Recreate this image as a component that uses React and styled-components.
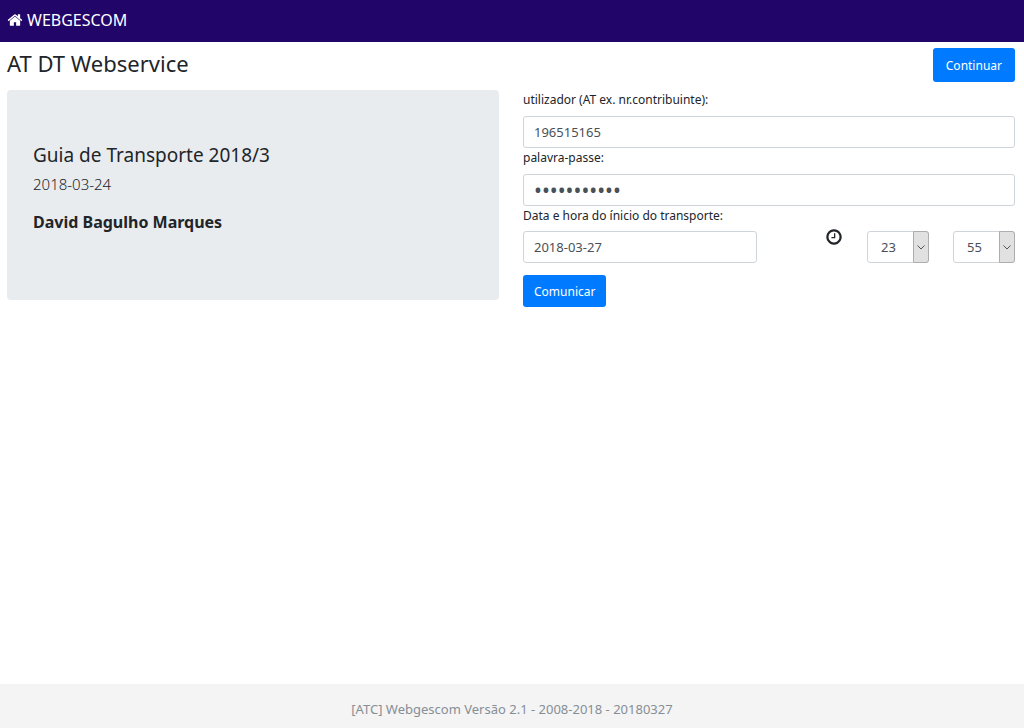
import React from "react";
import styled, { createGlobalStyle } from "styled-components";

const GlobalStyle = createGlobalStyle`
  *, *::before, *::after { box-sizing: border-box; }
  body {
    margin: 0;
    background: #fff;
    color: #212529;
    font-family: "Noto Sans", "Open Sans", sans-serif;
    font-size: 12px;
    line-height: 20px;
  }
  input, select, button { font-family: inherit; }
`;

const Page = styled.div`
  display: flex;
  flex-direction: column;
  min-height: 100vh;
`;

const Navbar = styled.nav`
  display: flex;
  align-items: center;
  height: 42px;
  padding: 0 7px 3px;
  background: #220569;
`;

const Brand = styled.a`
  display: flex;
  align-items: center;
  gap: 4px;
  color: #fff;
  font-size: 16px;
  text-decoration: none;
`;

const Icon = styled.svg`
  display: block;
  width: ${(p) => p.$size}px;
  height: ${(p) => p.$size}px;
  fill: currentColor;
`;

const Main = styled.main`
  flex: 1;
  padding: 6px 9px 24px 7px;
`;

const TitleRow = styled.div`
  display: flex;
  justify-content: space-between;
  align-items: flex-start;
  margin-bottom: 8px;
`;

const Title = styled.h1`
  margin: 0;
  font-size: 22px;
  font-weight: 400;
  line-height: 30px;
`;

const Button = styled.button`
  height: ${(p) => (p.$large ? 34 : 32)}px;
  padding: 1px ${(p) => (p.$large ? 13 : 11)}px 0;
  border: 0;
  border-radius: 3px;
  background: #007bff;
  color: #fff;
  font-size: 12px;
  line-height: 20px;
  cursor: pointer;
`;

const Columns = styled.div`
  display: grid;
  grid-template-columns: minmax(0, 1fr) minmax(0, 1fr);
  align-items: start;
  gap: 24px;
`;

const Summary = styled.section`
  padding: 51px 26px 65px;
  border-radius: 4px;
  background: #e9ecef;
`;

const DocumentName = styled.h2`
  margin: 0 0 4px;
  font-size: 19px;
  font-weight: 400;
  line-height: 28px;
`;

const DocumentDate = styled.p`
  margin: 0 0 14px;
  font-size: 15px;
  font-weight: 300;
  line-height: 22px;
`;

const Customer = styled.p`
  margin: 0;
  font-size: 16px;
  font-weight: 700;
  line-height: 26px;
`;

const Form = styled.form`
  display: flex;
  flex-direction: column;
  align-items: stretch;
`;

const Label = styled.label`
  margin-bottom: ${(p) => (p.$spaced ? 6 : 5)}px;
`;

const Input = styled.input`
  width: 100%;
  height: 32px;
  margin: 0;
  padding: 0 10px;
  border: 1px solid #ced4da;
  border-radius: 3px;
  background: #fff;
  color: #495057;
  font-size: 13px;
`;

const PasswordInput = styled(Input)`
  font-size: 21px;
`;

const TimeRow = styled.div`
  display: grid;
  grid-template-columns: minmax(0, 234fr) repeat(3, minmax(0, 62fr));
  gap: 24px;
  margin-bottom: 12px;
`;

const ClockCell = styled.div`
  display: flex;
  justify-content: flex-end;
  align-items: flex-start;
  margin-top: -3px;
`;

const SelectBox = styled.div`
  position: relative;
`;

const Select = styled.select`
  appearance: none;
  width: 100%;
  height: 32px;
  margin: 0;
  padding: 0 16px 0 13px;
  border: 1px solid #ced4da;
  border-radius: 3px;
  background: #fff;
  color: #495057;
  font-size: 13px;
`;

const Arrow = styled.span`
  position: absolute;
  top: 0;
  right: 0;
  bottom: 0;
  display: flex;
  align-items: center;
  justify-content: center;
  width: 16px;
  border: 1px solid #adadad;
  border-radius: 0 3px 3px 0;
  background: #e1e1e1;
  pointer-events: none;
`;

const Chevron = styled.svg`
  width: 8px;
  height: 5px;
  fill: none;
  stroke: #555;
`;

const Footer = styled.footer`
  padding: 15px 12px 9px;
  background: #f4f4f4;
  color: #868e96;
  font-size: 13px;
  text-align: center;
`;

function HomeIcon() {
  return (
    <Icon $size={16} viewBox="0 0 1792 1792" aria-hidden="true">
      <path d="M1472 992v480q0 26-19 45t-45 19h-384v-384h-256v384h-384q-26 0-45-19t-19-45v-480q0-1 .5-3t.5-3l575-474 575 474q1 2 1 6zm223-69l-62 74q-8 9-21 11h-3q-13 0-21-7l-692-577-692 577q-12 8-24 7-13-2-21-11l-62-74q-8-10-7-23.5t11-21.5l719-599q32-26 76-26t76 26l244 204v-195q0-14 9-23t23-9h192q14 0 23 9t9 23v408l219 182q10 8 11 21.5t-7 23.5z" />
    </Icon>
  );
}

function ClockIcon() {
  return (
    <Icon $size={18} viewBox="0 0 1792 1792" aria-hidden="true">
      <path d="M1024 544v448q0 14-9 23t-23 9h-320q-14 0-23-9t-9-23v-64q0-14 9-23t23-9h224v-352q0-14 9-23t23-9h64q14 0 23 9t9 23zm416 352q0-148-73-273t-198-198-273-73-273 73-198 198-73 273 73 273 198 198 273 73 273-73 198-198 73-273zm224 0q0 209-103 385.5t-279.5 279.5-385.5 103-385.5-103-279.5-279.5-103-385.5 103-385.5 279.5-279.5 385.5-103 385.5 103 279.5 279.5 103 385.5z" />
    </Icon>
  );
}

function TimeSelect({ label, count, value }) {
  return (
    <SelectBox>
      <Select aria-label={label} defaultValue={value}>
        {Array.from({ length: count }, (_, i) => String(i).padStart(2, "0")).map((n) => (
          <option key={n} value={n}>{n}</option>
        ))}
      </Select>
      <Arrow>
        <Chevron viewBox="0 0 8 5" aria-hidden="true">
          <path d="M.5.5 4 4 7.500.5" />
        </Chevron>
      </Arrow>
    </SelectBox>
  );
}

export default function App() {
  return (
    <>
      <GlobalStyle />
      <Page>
        <Navbar>
          <Brand href="#"><HomeIcon />WEBGESCOM</Brand>
        </Navbar>
        <Main>
          <TitleRow>
            <Title>AT DT Webservice</Title>
            <Button type="button" $large>Continuar</Button>
          </TitleRow>
          <Columns>
            <Summary>
              <DocumentName>Guia de Transporte 2018/3</DocumentName>
              <DocumentDate>2018-03-24</DocumentDate>
              <Customer>David Bagulho Marques</Customer>
            </Summary>
            <Form onSubmit={(e) => e.preventDefault()}>
              <Label htmlFor="user" $spaced>utilizador (AT ex. nr.contribuinte):</Label>
              <Input id="user" type="text" defaultValue="196515165" />
              <Label htmlFor="password" $spaced>palavra-passe:</Label>
              <PasswordInput id="password" type="password" defaultValue="transporte1" />
              <Label htmlFor="date">Data e hora do ínicio do transporte:</Label>
              <TimeRow>
                <Input id="date" type="text" defaultValue="2018-03-27" />
                <ClockCell><ClockIcon /></ClockCell>
                <TimeSelect label="Hora" count={24} value="23" />
                <TimeSelect label="Minutos" count={60} value="55" />
              </TimeRow>
              <div>
                <Button type="submit">Comunicar</Button>
              </div>
            </Form>
          </Columns>
        </Main>
        <Footer>[ATC] Webgescom Versão 2.1 - 2008-2018 - 20180327</Footer>
      </Page>
    </>
  );
}
